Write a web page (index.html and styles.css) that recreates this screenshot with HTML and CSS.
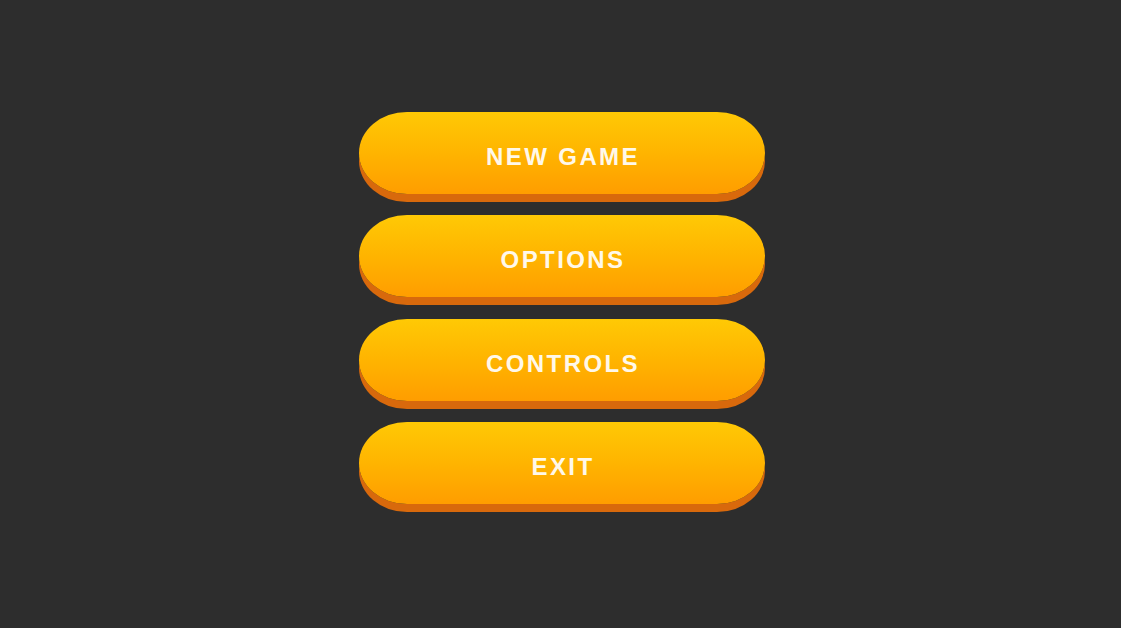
FILE: index.html
```html
<!DOCTYPE html>
<html lang="en">
<head>
<meta charset="utf-8">
<title>Main Menu</title>
<link rel="stylesheet" href="styles.css">
</head>
<body>
<main class="menu">
  <button class="menu-btn">NEW GAME</button>
  <button class="menu-btn">OPTIONS</button>
  <button class="menu-btn">CONTROLS</button>
  <button class="menu-btn">EXIT</button>
</main>
</body>
</html>
```

FILE: styles.css
```css
html, body {
  margin: 0;
  padding: 0;
  height: 100%;
  background: #2d2d2d;
}

.menu {
  display: flex;
  flex-direction: column;
  align-items: center;
  gap: 21.3px;
  padding-top: 112px;
  padding-left: 3px;
}

.menu-btn {
  width: 406px;
  height: 82px;
  border: none;
  border-radius: 48px / 41px;
  background: linear-gradient(to bottom, #ffc905 0%, #ffb400 50%, #ff9d00 100%);
  box-shadow: 0 8px 0 #d8690c;
  color: #fff8ea;
  font-family: "Liberation Sans", Arial, sans-serif;
  font-weight: bold;
  font-size: 24px;
  letter-spacing: 2.4px;
  padding: 8px 0 0 2px;
  cursor: pointer;
}
```
